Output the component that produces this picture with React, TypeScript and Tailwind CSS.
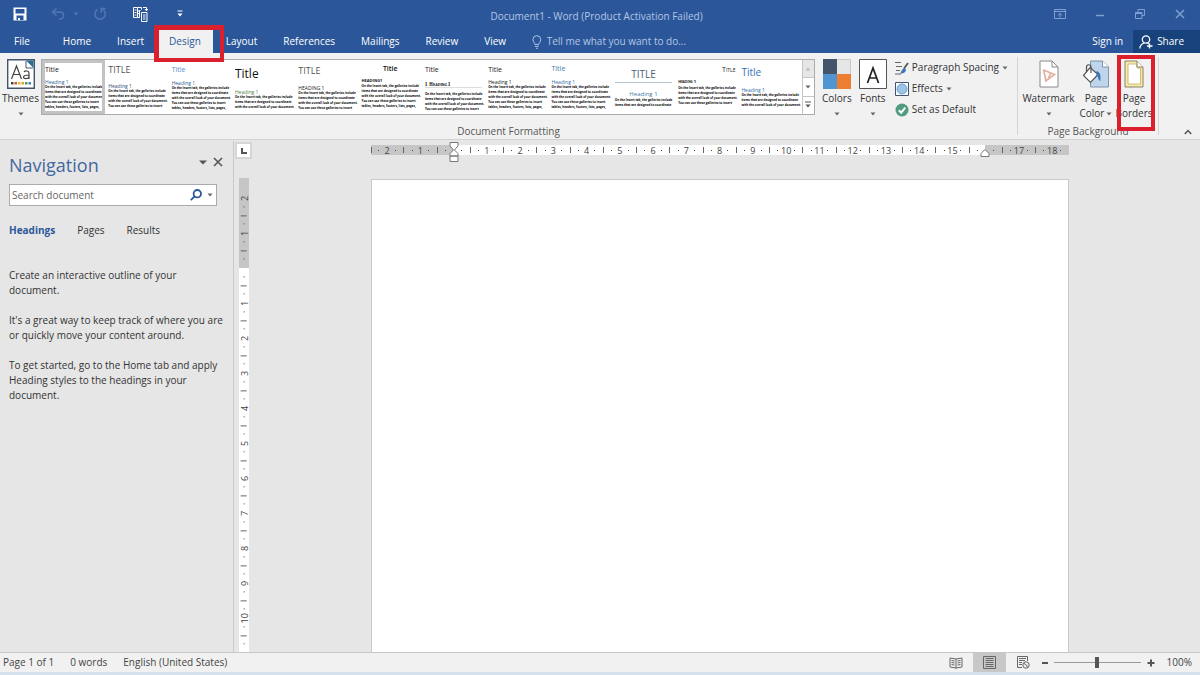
import React from "react";

const BODY_LINES = [
  "On the Insert tab, the galleries include",
  "items that are designed to coordinate",
  "with the overall look of your document.",
  "You can use these galleries to insert",
  "tables, headers, footers, lists, pages,",
];

type StyleSet = {
  name: string;
  title: string;
  titleClass: string;
  heading: string;
  headingClass: string;
  lines: number;
};

const STYLE_SETS: StyleSet[] = [
  { name: "Default", title: "Title", titleClass: "mt-px text-[7px] text-[#222]", heading: "Heading 1", headingClass: "mt-[3px] text-[5px] text-[#2f5f8f]", lines: 5 },
  { name: "Basic", title: "TITLE", titleClass: "mt-1 text-[9px] text-[#555]", heading: "Heading 1", headingClass: "mt-[7px] text-[5px] text-[#1f4e79]", lines: 4 },
  { name: "Casual", title: "Title", titleClass: "mt-1 text-[7px] text-[#5b8fc4]", heading: "Heading 1", headingClass: "mt-1 text-[5px] text-[#2f5f8f]", lines: 5 },
  { name: "Centered", title: "Title", titleClass: "mt-2 text-[12px] text-[#111]", heading: "Heading 1", headingClass: "mt-[9px] text-[5px] text-[#568244]", lines: 3 },
  { name: "Lines", title: "TITLE", titleClass: "mt-[5px] text-[9px] text-[#555]", heading: "HEADING 1", headingClass: "mt-2 text-[5px] text-[#222]", lines: 4 },
  { name: "Minimalist", title: "Title", titleClass: "mt-[3px] text-center text-[7px] font-semibold text-[#111]", heading: "HEADING1", headingClass: "mt-[3px] text-[4px] font-bold text-[#111]", lines: 5 },
  { name: "Numbered", title: "Title", titleClass: "mt-1 text-[7px] text-[#222]", heading: "1  Heading 1", headingClass: "mt-[5px] mb-1 border-b border-[#ddd] font-serif text-[5px] font-bold text-[#111] [font-variant:small-caps]", lines: 4 },
  { name: "Shaded", title: "Title", titleClass: "mt-1 text-[7px] text-[#222]", heading: "Heading 1", headingClass: "mt-[3px] text-[5px] text-[#222]", lines: 5 },
  { name: "Simple", title: "Title", titleClass: "mt-[3px] text-[7px] text-[#4a7aa8]", heading: "Heading 1", headingClass: "mt-1 text-[5px] text-[#2f6fa8]", lines: 5 },
  { name: "Stylish", title: "TITLE", titleClass: "mt-2 border-b border-[#b5c3d0] pb-0.5 text-center text-[10px] text-[#4b6076]", heading: "Heading 1", headingClass: "mt-2 mb-px text-center text-[6px] text-[#3f7ba8]", lines: 2 },
  { name: "Word 2003", title: "Title", titleClass: "mt-1 text-right text-[7px] text-[#222] [font-variant:small-caps]", heading: "Heading 1", headingClass: "mt-[3px] mb-px text-[4px] font-bold text-[#111] [font-variant:small-caps]", lines: 4 },
  { name: "Word 2013", title: "Title", titleClass: "mt-[6px] text-[10px] text-[#2e74b5]", heading: "Heading 1", headingClass: "mt-[9px] text-[5px] text-[#2f6fa8]", lines: 3 },
];

function Caret({ className = "text-[#666]" }: { className?: string }) {
  return (
    <svg viewBox="0 0 6 4" className={`h-1 w-1.5 shrink-0 ${className}`} aria-hidden="true">
      <path d="M0.5 0.5h5L3 3.5z" fill="currentColor" />
    </svg>
  );
}

function TitleBar() {
  return (
    <header className="flex h-7 shrink-0 items-center text-white">
      <div className="flex flex-1 items-center pl-[13px]">
        <button aria-label="Save">
          <svg viewBox="0 0 14 14" className="size-3.5">
            <path fillRule="evenodd" d="M0.5 0.5h13v13H0.5zM2.500 2v4.500h9V2zM3.500 8.500V13h1.500v-2h2v2h3.500V8.500z" fill="#fff" />
          </svg>
        </button>
        <button aria-label="Undo" className="ml-6 flex items-center gap-2 text-[#5077b5]">
          <svg viewBox="0 0 14 14" className="size-3.5" fill="none" stroke="currentColor" strokeWidth="1.5">
            <path d="M5.5 1.5 1.5 5l4 3.5M1.8 5H9c2.600 0 3.600 1.500 3.600 3.500S11 12 8 12.500" />
          </svg>
          <Caret className="text-[#5077b5]" />
        </button>
        <button aria-label="Repeat" className="ml-3.5 text-[#5077b5]">
          <svg viewBox="0 0 14 14" className="size-3.5" fill="none" stroke="currentColor" strokeWidth="1.5">
            <path d="M4.500 2.500A5.200 5.200 0 1 0 10 2.700M8 1.500h4.500M8.300 1v5" />
          </svg>
        </button>
        <button aria-label="Copy formatting" className="ml-[26px]">
          <svg viewBox="0 0 16 16" className="size-4" fill="none" stroke="#fff" strokeWidth="1">
            <path d="M0.500 1.500h4v10h-4zM4.500 1.500h4v2M4.500 11.500h2M7.500 4.500h-1v7M1.500 4h2M1.500 6.500h2M1.500 9h2M10 1.500h3.500v3M12 3l1.500 1.800L15 3" />
            <path d="M8.500 6.500h5.500v9H8.500zM10 9h2.500M10 11h2.500M10 13h2.500" />
            <path d="M5 5h2M5 7.500h2" />
          </svg>
        </button>
        <button aria-label="Customize Quick Access Toolbar" className="ml-7">
          <svg viewBox="0 0 6 8" className="h-2 w-1.5">
            <path d="M0.500 0.500h5v1h-5zM0.500 3.500h5L3 6.500z" fill="#fff" />
          </svg>
        </button>
      </div>
      <h1 className="mt-1 mr-1.5 text-[10px] leading-4 text-[#b4c6e4]">Document1 - Word (Product Activation Failed)</h1>
      <div className="flex flex-1 items-center justify-end gap-7 pr-[14px] text-[#7f9fd0]">
        <button aria-label="Ribbon Display Options">
          <svg viewBox="0 0 12 12" className="size-3" fill="none" stroke="currentColor">
            <path d="M0.500 1.500h11v9H0.500zM0.500 3.500h11M6 9.500V5.500M4 7.300 6 5.200l2 2.100" />
          </svg>
        </button>
        <button aria-label="Minimize">
          <svg viewBox="0 0 12 12" className="size-3" stroke="currentColor" strokeWidth="1.500">
            <path d="M2 7.500h8" />
          </svg>
        </button>
        <button aria-label="Restore">
          <svg viewBox="0 0 12 12" className="size-3" fill="none" stroke="currentColor">
            <path d="M1.500 4.500h6.500v6H1.500zM1.500 5.500h6.500M4 4.500v-3h6.500v6H8" />
          </svg>
        </button>
        <button aria-label="Close">
          <svg viewBox="0 0 12 12" className="size-3" stroke="currentColor" strokeWidth="1.500">
            <path d="m2 2 8 8M10 2l-8 8" />
          </svg>
        </button>
      </div>
    </header>
  );
}

const TABS = ["Home", "Insert", "Design", "Layout", "References", "Mailings", "Review", "View"];

function TabBar() {
  return (
    <nav aria-label="Ribbon tabs" className="flex h-[25px] shrink-0 items-stretch pt-0.5 text-[10px] text-white">
      <button className="mr-1.5 pl-3.5 pr-3.5">File</button>
      {TABS.map((tab) =>
        tab === "Design" ? (
          <div key={tab} className="relative flex">
            <button className="bg-[#f1f1f1] px-3 text-[#2b579a]">{tab}</button>
            <span className="pointer-events-none absolute -top-[5px] -right-[11px] -bottom-[9px] -left-[3px] z-10 border-[5px] border-r-4 border-b-4 border-[#d9202c]" />
          </div>
        ) : (
          <button key={tab} className="px-[13px]">{tab}</button>
        )
      )}
      <label className="ml-3 flex flex-1 items-center gap-1 text-[#b4c6e4]">
        <svg viewBox="0 0 12 14" className="h-3.5 w-3" fill="none" stroke="currentColor" aria-hidden="true">
          <path d="M4 9.500c0-1.500-2-2.500-2-5a4 4 0 0 1 8 0c0 2.500-2 3.500-2 5zM4 11.500h4M5 13.500h2" />
        </svg>
        <input aria-label="Tell me what you want to do" placeholder="Tell me what you want to do..." className="w-full bg-transparent outline-none placeholder:text-[#b4c6e4]" />
      </label>
      <button className="px-2.5">Sign in</button>
      <button className="flex items-center gap-1 bg-[#17427c] pr-4 pl-1.5">
        <svg viewBox="0 0 14 14" className="size-3.5" fill="none" stroke="#fff" strokeWidth="1.300" aria-hidden="true">
          <circle cx="7" cy="4.500" r="3.700" />
          <path d="M0.800 13.500C1 10.500 3 8.800 5.200 8M8.500 8l1.500 1M10.500 8.500v5M8 11h5.500" />
        </svg>
        Share
      </button>
    </nav>
  );
}

function Thumbnail({ set, selected }: { set: StyleSet; selected: boolean }) {
  return (
    <button
      aria-label={set.name}
      className={`flex min-w-0 flex-1 flex-col items-stretch overflow-hidden text-left ${selected ? "border-[3px] border-[#c3c3c3]" : "px-[3px]"}`}
    >
      <span className={`block leading-3 ${set.titleClass}`}>{set.title}</span>
      <span className={`block leading-[6px] whitespace-pre ${set.headingClass}`}>{set.heading}</span>
      {BODY_LINES.slice(0, set.lines).map((line) => (
        <span key={line} className="block text-[3px] leading-[5px] font-bold whitespace-nowrap text-black">{line}</span>
      ))}
    </button>
  );
}

function Gallery() {
  return (
    <div className="flex h-14 min-w-0 flex-1 border border-[#ababab] bg-white">
      <div className="flex min-w-0 flex-1">
        {STYLE_SETS.map((set, i) => (
          <Thumbnail key={set.name} set={set} selected={i === 0} />
        ))}
      </div>
      <div className="flex w-3 flex-col divide-y divide-[#c6c6c6] border-l border-[#c6c6c6]">
        <button aria-label="Previous row" className="flex flex-1 items-center justify-center bg-[#e6e6e6]">
          <Caret className="rotate-180 text-[#bbb]" />
        </button>
        <button aria-label="Next row" className="flex flex-1 items-center justify-center"><Caret /></button>
        <button aria-label="More" className="flex flex-1 items-center justify-center">
          <svg viewBox="0 0 6 8" className="h-2 w-1.5"><path d="M0 0.500h6v1H0zM0.500 3.500h5L3 6.500z" fill="#555" /></svg>
        </button>
      </div>
    </div>
  );
}

function LargeButton({ icon, label, second, caret, className = "" }: { icon: React.ReactNode; label: string; second?: string; caret?: boolean; className?: string }) {
  return (
    <button className={`flex shrink-0 flex-col items-center ${className}`}>
      <span className="flex h-[30px] items-center">{icon}</span>
      <span className="mt-0.5 leading-[15px]">{label}</span>
      <span className="flex h-[15px] items-center gap-0.5 leading-[15px]">
        {second}
        {caret && <Caret />}
      </span>
    </button>
  );
}

function ThemesIcon() {
  return (
    <svg viewBox="0 0 28 30" className="h-[30px] w-7">
      <path d="M0.700 0.700h26.600v28.600H0.700z" fill="#fff" stroke="#44546a" strokeWidth="1.400" />
      <path d="M19 1.500 26.500 9V1.500z" fill="#2b6c93" />
      <path d="M19 2v7h7" fill="#fff" stroke="#44546a" />
      <path d="M4.500 20 9.500 7l5 13M6.300 15.500h6.400" fill="none" stroke="#444" strokeWidth="1.200" />
      <path d="M17 13c1-1.500 5-1.500 5 1V20M22 16c-3 0-5.500.5-5.500 2.200S20.500 20.500 22 18" fill="none" stroke="#444" strokeWidth="1.200" />
      <path d="M4 23h2.500v2.500H4z" fill="#444" />
      <path d="M7.500 23H10v2.500H7.500z" fill="#c55a28" />
      <path d="M11 23h2.500v2.500H11z" fill="#eab632" />
      <path d="M14.500 23H17v2.500h-2.500z" fill="#e6a030" />
      <path d="M18 23h2.500v2.500H18z" fill="#4f9d5b" />
      <path d="M21.500 23H24v2.500h-2.500z" fill="#3d82b8" />
    </svg>
  );
}

function ColorsIcon() {
  return (
    <svg viewBox="0 0 28 30" className="h-[30px] w-7">
      <path d="M0 0h14v15H0z" fill="#44546a" />
      <path d="M14 0h14v15H14z" fill="#e7e6e6" />
      <path d="M14.500 0.500h13V15" fill="none" stroke="#c8c8c8" />
      <path d="M0 15h14v15H0z" fill="#5094d2" />
      <path d="M14 15h14v15H14z" fill="#ed7d31" />
    </svg>
  );
}

function FontsIcon() {
  return (
    <svg viewBox="0 0 28 30" className="h-[30px] w-7">
      <path d="M0.500 0.500h27v29H0.500z" fill="#fff" stroke="#555" />
      <path d="M8.500 24 14 9l5.500 15M10.500 19h7" fill="none" stroke="#222" strokeWidth="1.700" />
    </svg>
  );
}

function WatermarkIcon() {
  return (
    <svg viewBox="0 0 20 28" className="h-7 w-5">
      <path d="M1 1h12l6 6v20H1z" fill="#fff" stroke="#888" />
      <path d="M13 1v6h6" fill="none" stroke="#888" />
      <path d="M4.500 10 15.500 14.500 6 21.500M4.500 9.500 7 21M11.500 13 9.500 18.500" fill="none" stroke="#e3b0a3" strokeWidth="1.700" />
    </svg>
  );
}

function PageColorIcon() {
  return (
    <svg viewBox="0 0 28 28" className="size-7">
      <path d="M8.500 1h12l6 6v20h-18z" fill="#bfd5ec" stroke="#8094aa" />
      <path d="M20.500 1v6h6" fill="#fff" stroke="#8094aa" />
      <path d="m8 7.500 8 7-7.500 8-7-7z" fill="#fff" stroke="#555" strokeWidth="1.200" />
      <path d="M4.500 12V7c0-3 4.500-3 4.500 0v6" fill="none" stroke="#555" strokeWidth="1.200" />
      <path d="M14.500 11c4 1 4.500 5 3.800 10-2.500-1-1.500-4-3.800-6z" fill="#3d76b5" />
    </svg>
  );
}

function PageBordersIcon() {
  return (
    <svg viewBox="0 0 20 28" className="h-7 w-5">
      <path d="M1 1h12l6 6v20H1z" fill="#f4e8b4" stroke="#8b8465" />
      <path d="M4 4h9v4h3.500v16H4z" fill="#fff" stroke="#d3bd68" />
      <path d="M13 1v6h6" fill="#fff" stroke="#8b8465" />
    </svg>
  );
}

function Ribbon() {
  return (
    <section aria-label="Design ribbon" className="flex h-[87px] shrink-0 items-stretch border-b border-[#d2d2d2] bg-[#f1f1f1] text-[10px] text-[#333]">
      <div className="my-1 flex min-w-0 flex-1 flex-col border-r border-[#d5d5d5]">
        <div className="mt-0.5 flex h-[66px] items-start">
          <LargeButton className="w-[41px]" icon={<ThemesIcon />} label="Themes" caret />
          <Gallery />
          <LargeButton className="ml-0.5 w-10" icon={<ColorsIcon />} label="Colors" caret />
          <LargeButton className="w-8" icon={<FontsIcon />} label="Fonts" caret />
          <div className="flex shrink-0 flex-col pr-[9px] pl-1.5">
            <button className="-mt-0.5 flex h-[21px] items-center gap-[3px] whitespace-nowrap">
              <svg viewBox="0 0 14 14" className="size-3.5" fill="none" aria-hidden="true">
                <path d="M0 1.500h6M1 5.500h6M1 9.500h4M0 13h6" stroke="#666" />
                <path d="m13 2-4 5.500" stroke="#555" strokeWidth="1.800" />
                <path d="M9.500 7c-2 0-2.500 2.500-4.500 5.500 3 .5 6-1 6-4z" fill="#3d76b5" />
              </svg>
              Paragraph Spacing
              <Caret />
            </button>
            <button className="flex h-[21px] items-center gap-[3px]">
              <svg viewBox="0 0 14 14" className="size-3.5" aria-hidden="true">
                <path d="M0.500 0.500h13v13H0.500z" fill="#fff" stroke="#44546a" />
                <circle cx="7" cy="7" r="5" fill="#9cc3e8" stroke="#6d9fd0" />
              </svg>
              Effects
              <Caret />
            </button>
            <button className="flex h-[21px] items-center gap-[3px]">
              <svg viewBox="0 0 14 14" className="size-3.5" aria-hidden="true">
                <circle cx="7" cy="7" r="6.500" fill="#4f9c80" />
                <path d="m3.800 7.200 2.400 2.500 4-5" fill="none" stroke="#fff" strokeWidth="2" />
              </svg>
              Set as Default
            </button>
          </div>
        </div>
        <p className="mt-[3px] text-center leading-[14px] text-[#555]">Document Formatting</p>
      </div>
      <div className="my-1 flex shrink-0 flex-col border-r border-[#d5d5d5]">
        <div className="mt-0.5 flex h-[66px] items-start pr-[3px]">
          <LargeButton className="w-[61px]" icon={<WatermarkIcon />} label="Watermark" caret />
          <LargeButton className="w-[34px]" icon={<PageColorIcon />} label="Page" second="Color" caret />
          <div className="relative flex">
            <LargeButton className="w-[42px]" icon={<PageBordersIcon />} label="Page" second="Borders" />
            <span className="pointer-events-none absolute -top-1 right-0 -bottom-[10px] left-1 border-4 border-[#d9202c]" />
          </div>
        </div>
        <p className="mt-[3px] text-center leading-[14px] text-[#555]">Page Background</p>
      </div>
      <div className="flex w-[41px] items-end justify-center pb-1 pl-4">
        <button aria-label="Collapse the Ribbon">
          <svg viewBox="0 0 8 6" className="h-1.5 w-2" fill="none" stroke="#555" strokeWidth="1.500"><path d="m0.800 5 3.200-3.500L7.200 5" /></svg>
        </button>
      </div>
    </section>
  );
}

function NavigationPane() {
  return (
    <aside className="flex w-[234px] shrink-0 flex-col border-r border-[#c9c9c9] pt-[11px] pr-2.5 pl-[9px] text-[10px] text-[#333]">
      <div className="flex items-center">
        <h2 className="flex-1 text-[18px] leading-[26px] text-[#44679f]">Navigation</h2>
        <button aria-label="Task pane options" className="-mt-1.5 mr-1.5">
          <svg viewBox="0 0 8 5" className="h-[5px] w-2"><path d="M0 0.500h8L4 4.500z" fill="#555" /></svg>
        </button>
        <button aria-label="Close pane" className="-mt-1.5">
          <svg viewBox="0 0 10 10" className="size-2.5" stroke="#555" strokeWidth="1.600"><path d="m1 1 8 8M9 1 1 9" /></svg>
        </button>
      </div>
      <div className="mt-1.5 mr-1.5 flex h-[22px] items-center border border-[#ababab] bg-white pr-[3px] pl-0.5">
        <input aria-label="Search document" placeholder="Search document" className="w-full min-w-0 flex-1 outline-none placeholder:text-[#666]" />
        <button aria-label="Search" className="mr-[5px]">
          <svg viewBox="0 0 12 12" className="size-3" fill="none" stroke="#2b579a" strokeWidth="1.800"><circle cx="7.300" cy="4.700" r="3.700" /><path d="M4.600 7.400 0.800 11.200" /></svg>
        </button>
        <button aria-label="Search options"><Caret /></button>
      </div>
      <div className="mt-4 flex gap-[22px] leading-4">
        <button className="font-bold text-[#2b579a]">Headings</button>
        <button>Pages</button>
        <button>Results</button>
      </div>
      <div className="mt-[30px] flex flex-col gap-[15px] leading-[15px]">
        <p>Create an interactive outline of your<br />document.</p>
        <p>It's a great way to keep track of where you are<br />or quickly move your content around.</p>
        <p>To get started, go to the Home tab and apply<br />Heading styles to the headings in your<br />document.</p>
      </div>
    </aside>
  );
}

const H_MARKS = Array.from({ length: 83 }, (_, i) => {
  const quarter = i - 9;
  const value = Math.abs(quarter / 4);
  if (quarter % 4 === 0) return value === 0 || value === 16 ? "" : String(value);
  return quarter % 2 === 0 ? "|" : "·";
});

function Mark({ mark }: { mark: string }) {
  if (mark === "|") return <span className="h-1.5 w-px bg-[#666]" />;
  if (mark === "·") return <span className="size-px bg-[#444]" />;
  return <span>{mark}</span>;
}

function HorizontalRuler() {
  return (
    <div className="relative mt-1 flex h-2.5 w-[698px] shrink-0 items-center bg-[linear-gradient(to_right,#c6c6c6_12%,#fff_12%,#fff_88%,#c6c6c6_88%)] text-[9px] leading-none text-[#444]">
      <span className="flex flex-[0.5]"><Mark mark="|" /></span>
      {H_MARKS.map((mark, i) => (
        <span key={i} className="flex w-0 flex-1 items-center justify-center"><Mark mark={mark} /></span>
      ))}
      <span className="flex-[0.5]" />
      <svg viewBox="0 0 10 22" className="absolute top-[-4px] left-[12%] h-[22px] w-2.5 -translate-x-1/2" fill="#fff" stroke="#777">
        <path d="M1 1.500h8V5L5.500 9 9 12.500V15H1v-2.500L4.500 9 1 5zM1 15h8v5.500H1z" />
      </svg>
      <svg viewBox="0 0 10 10" className="absolute top-[3px] left-[88%] size-2.5 -translate-x-1/2" fill="#fff" stroke="#777">
        <path d="M1 8.500V5.500L5 1.500l4 4v3z" />
      </svg>
    </div>
  );
}

const V_VALUES = ["2", "1", "", "1", "2", "3", "4", "5", "6", "7", "8", "9", "10"];

function VerticalRuler() {
  return (
    <div className="mt-[19px] ml-1 min-h-0 w-2.5 flex-1 overflow-hidden bg-[linear-gradient(#c6c6c6_90px,#fff_90px)] pt-4 text-[9px] leading-none text-[#444]">
      {V_VALUES.map((value, i) => (
        <div key={i} className="flex h-[35px] flex-col">
          {[value, "·", "|", "·"].map((mark, j) => (
            <span key={j} className="flex h-0 flex-1 -rotate-90 items-center justify-center"><Mark mark={mark} /></span>
          ))}
        </div>
      ))}
    </div>
  );
}

function Workspace() {
  return (
    <main className="flex min-w-0 flex-1">
      <div className="flex w-[17px] shrink-0 flex-col pl-px">
        <button aria-label="Tab selector" className="mt-px flex size-[17px] shrink-0 items-center justify-center border-2 border-[#d6d6d6] bg-white">
          <svg viewBox="0 0 6 6" className="size-1.5" fill="none" stroke="#555" strokeWidth="2"><path d="M1 0v5h5" /></svg>
        </button>
        <VerticalRuler />
      </div>
      <div className="flex min-w-0 flex-1 flex-col items-center overflow-hidden pr-3">
        <HorizontalRuler />
        <div className="mt-6 w-[698px] flex-1 border border-b-0 border-[#c9c9c9] bg-white" />
      </div>
    </main>
  );
}

function StatusBar() {
  return (
    <footer className="flex h-[23px] shrink-0 items-stretch border-t border-b-[3px] border-t-[#c6c6c6] border-b-[#d5e2ee] bg-[#f1f1f1] pr-2 pl-[3px] text-[10px] text-[#444]">
      <div className="flex flex-1 items-center gap-4">
        <span>Page 1 of 1</span>
        <span>0 words</span>
        <span>English (United States)</span>
      </div>
      <button aria-label="Read Mode" className="flex w-[34px] items-center justify-center">
        <svg viewBox="0 0 14 12" className="h-3 w-3.5" fill="none" stroke="#666"><path d="M7 2 1 1v9l6 1 6-1V1zM7 2v9.500M2.500 3.500l3 .5M2.500 5.500l3 .5M2.500 7.500l3 .5M11.500 3.500l-3 .5M11.500 5.500l-3 .5M11.500 7.500l-3 .5" /></svg>
      </button>
      <button aria-label="Print Layout" className="flex w-[33px] items-center justify-center bg-[#c8c8c8]">
        <svg viewBox="0 0 13 13" className="size-[13px]" fill="none" stroke="#666"><path d="M0.500 0.500h12v12H0.500zM2.500 2.500h8M2.500 4.500h8M2.500 6.500h8M2.500 8.500h8M2.500 10.500h8" /></svg>
      </button>
      <button aria-label="Web Layout" className="flex w-[34px] items-center justify-center">
        <svg viewBox="0 0 14 13" className="h-[13px] w-3.5" fill="none" stroke="#666"><path d="M6 11.500H1.500V0.500h10V5M3 2.500h7M3 4.500h6M3 6.500h3M3 8.500h3" /><circle cx="10" cy="9" r="3.200" /><path d="M8 7.500 10.500 9l1 2.500" /></svg>
      </button>
      <div className="flex items-center gap-1">
        <button aria-label="Zoom out" className="flex h-full w-2.5 items-center justify-center"><span className="h-0.5 w-1.5 bg-[#555]" /></button>
        <input
          type="range"
          aria-label="Zoom"
          min={0}
          max={200}
          defaultValue={100}
          className="h-3 w-[87px] appearance-none bg-[linear-gradient(#999,#999)] bg-[length:100%_1px] bg-center bg-no-repeat [&::-webkit-slider-thumb]:h-[11px] [&::-webkit-slider-thumb]:w-1 [&::-webkit-slider-thumb]:appearance-none [&::-webkit-slider-thumb]:bg-[#555]"
        />
        <button aria-label="Zoom in" className="flex h-full w-3 items-center justify-center">
          <svg viewBox="0 0 8 8" className="size-2" stroke="#555" strokeWidth="2"><path d="M0.500 4h7M4 0.500v7" /></svg>
        </button>
      </div>
      <button className="ml-2.5">100%</button>
    </footer>
  );
}

export default function App() {
  return (
    <div className="flex h-screen flex-col overflow-hidden bg-[#e6e6e6] font-['Open_Sans','Noto_Sans',sans-serif]">
      <div className="shrink-0 bg-[#2b579a]">
        <TitleBar />
        <TabBar />
      </div>
      <Ribbon />
      <div className="flex min-h-0 flex-1 pt-px">
        <NavigationPane />
        <Workspace />
      </div>
      <StatusBar />
    </div>
  );
}
